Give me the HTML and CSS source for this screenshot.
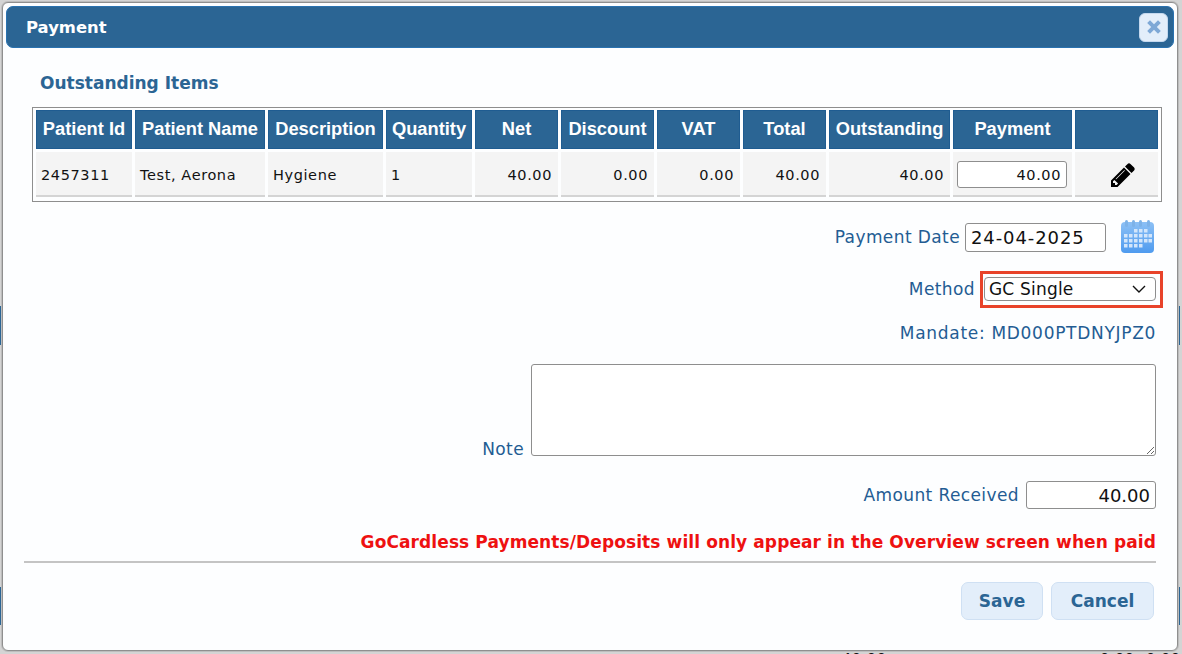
FILE: index.html
```html
<!DOCTYPE html>
<html lang="en">
<head>
    <meta charset="UTF-8">
    <meta name="viewport" content="width=device-width, initial-scale=1.0">
    <title>Payment</title>
    <link rel="stylesheet" href="styles.css">
</head>

<body>
    <!-- page behind the dialog, only slivers of it show -->
    <div class="back-bar back-bar-1"></div>
    <div class="back-bar back-bar-2"></div>
    <span class="back-text back-text-1">40.00</span>
    <span class="back-text back-text-2">0.00</span>
    <span class="back-text back-text-3">0.00</span>

    <div class="dialog">
        <header class="title-bar">
            <span class="title">Payment</span>
            <button class="close" type="button" aria-label="Close">
                <svg width="18" height="18" viewBox="0 0 18 18"><path d="M5 2.2 9 6.2 13 2.2 15.8 5 11.8 9 15.8 13 13 15.8 9 11.8 5 15.8 2.2 13 6.2 9 2.2 5Z"/></svg>
            </button>
        </header>

        <h2 class="section-title">Outstanding Items</h2>

        <div class="table-box">
            <table class="items">
                <colgroup>
                    <col class="c-id"><col class="c-name"><col class="c-desc"><col class="c-qty"><col class="c-net">
                    <col class="c-disc"><col class="c-vat"><col class="c-total"><col class="c-out"><col class="c-pay"><col class="c-edit">
                </colgroup>
                <thead>
                    <tr>
                        <th>Patient Id</th>
                        <th>Patient Name</th>
                        <th>Description</th>
                        <th>Quantity</th>
                        <th>Net</th>
                        <th>Discount</th>
                        <th>VAT</th>
                        <th>Total</th>
                        <th>Outstanding</th>
                        <th>Payment</th>
                        <th></th>
                    </tr>
                </thead>
                <tbody>
                    <tr>
                        <td>2457311</td>
                        <td>Test, Aerona</td>
                        <td>Hygiene</td>
                        <td>1</td>
                        <td class="num">40.00</td>
                        <td class="num">0.00</td>
                        <td class="num">0.00</td>
                        <td class="num">40.00</td>
                        <td class="num">40.00</td>
                        <td class="pay-cell"><input class="field pay-input" type="text" value="40.00"></td>
                        <td class="edit-cell">
                            <svg class="pencil" width="28" height="28" viewBox="0 0 1792 1792"><path d="M491 1536l91-91-235-235-91 91v107h128v128h107zm523-928q0-22-22-22-10 0-17 7l-542 542q-7 7-7 17 0 22 22 22 10 0 17-7l542-542q7-7 7-17zm-54-192l416 416-832 832h-416v-416zm683 96q0 53-37 90l-166 166-416-416 166-165q36-38 90-38 53 0 91 38l235 234q37 39 37 91z"/></svg>
                        </td>
                    </tr>
                </tbody>
            </table>
        </div>

        <form class="pay-form" action="#">
            <div class="row row-date">
                <label>Payment Date</label>
                <input class="field date-input" type="text" value="24-04-2025">
                <svg class="calendar" width="36" height="36" viewBox="0 0 36 36">
                    <defs>
                        <linearGradient id="calBody" x1="0" y1="0" x2="0" y2="1">
                            <stop offset="0" stop-color="#8cc0f5"/>
                            <stop offset="1" stop-color="#4f9bef"/>
                        </linearGradient>
                    </defs>
                    <rect x="1" y="3" width="33" height="31" rx="4" fill="url(#calBody)"/>
                    <g fill="#7db2e8">
                        <rect x="5" y="1" width="3" height="7" rx="1.5"/>
                        <rect x="12" y="1" width="3" height="7" rx="1.5"/>
                        <rect x="19" y="1" width="3" height="7" rx="1.5"/>
                        <rect x="27" y="1" width="3" height="7" rx="1.5"/>
                    </g>
                    <g fill="#d3e6fb">
                        <rect x="14" y="10" width="3.5" height="3.5"/><rect x="19" y="10" width="3.5" height="3.5"/><rect x="24" y="10" width="3.5" height="3.5"/>
                        <rect x="4" y="15" width="3.5" height="3.5"/><rect x="9" y="15" width="3.5" height="3.5"/><rect x="14" y="15" width="3.5" height="3.5"/><rect x="19" y="15" width="3.5" height="3.5"/><rect x="24" y="15" width="3.5" height="3.5"/><rect x="28.5" y="15" width="3.5" height="3.5"/>
                        <rect x="4" y="20" width="3.5" height="3.5"/><rect x="9" y="20" width="3.5" height="3.5"/><rect x="14" y="20" width="3.5" height="3.5"/><rect x="19" y="20" width="3.5" height="3.5"/><rect x="24" y="20" width="3.5" height="3.5"/><rect x="28.5" y="20" width="3.5" height="3.5"/>
                        <rect x="4" y="25" width="3.5" height="3.5"/><rect x="9" y="25" width="3.5" height="3.5"/><rect x="14" y="25" width="3.5" height="3.5"/><rect x="19" y="25" width="3.5" height="3.5"/>
                    </g>
                </svg>
            </div>

            <div class="row row-method">
                <label>Method</label>
                <div class="highlight">
                    <div class="select">
                        <span>GC Single</span>
                        <svg width="14" height="8" viewBox="0 0 14 8"><path d="M1 1 7 7 13 1" fill="none" stroke="#111" stroke-width="1.4"/></svg>
                    </div>
                </div>
            </div>

            <div class="row row-mandate">Mandate: MD000PTDNYJPZ0</div>

            <div class="row row-note">
                <label>Note</label>
                <textarea class="field note-input"></textarea>
            </div>

            <div class="row row-amount">
                <label>Amount Received</label>
                <input class="field amount-input" type="text" value="40.00">
            </div>

            <div class="row row-warning">GoCardless Payments/Deposits will only appear in the Overview screen when paid</div>

            <hr class="divider">

            <div class="row row-buttons">
                <button class="btn btn-save" type="button">Save</button>
                <button class="btn btn-cancel" type="button">Cancel</button>
            </div>
        </form>
    </div>
</body>

</html>
```

FILE: styles.css
```css
* {
    box-sizing: border-box;
}

html, body {
    height: 100%;
}

body {
    position: relative;
    margin: 0;
    padding: 2px 4px 3px 2px;
    background: #d4d4d4;
    font-family: "DejaVu Sans", sans-serif;
    overflow: hidden;
}

.back-bar {
    position: absolute;
    left: 0;
    width: 1180px;
    background: #2b6594;
}

.back-bar-1 {
    top: 306px;
    height: 39px;
}

.back-bar-2 {
    top: 587px;
    height: 38px;
}

.back-text {
    position: absolute;
    top: 650px;
    color: #111;
    font-size: 14.5px;
    letter-spacing: 0.6px;
}

.back-text-1 { left: 842px; }
.back-text-2 { left: 1100px; }
.back-text-3 { left: 1146px; }

.dialog {
    position: relative;
    height: 649px;
    background: #fdfeff;
    border: 1px solid #8f8f8f;
    border-radius: 6px;
    box-shadow: 0 0 0 1px #bdbdbd;
    padding: 3px;
}

.title-bar {
    height: 42px;
    background: #2b6594;
    border: 1px solid #2a72b0;
    border-radius: 7px;
    padding: 0 5px 0 19px;
    display: flex;
    align-items: center;
    justify-content: space-between;
}

.title {
    padding-top: 1px;
    color: #fff;
    font-size: 16.4px;
    font-weight: bold;
}

.close {
    width: 29px;
    height: 29px;
    padding: 0;
    background: #e3eefa;
    border: 1px solid #c4d8ee;
    border-radius: 6px;
    display: flex;
    align-items: center;
    justify-content: center;
}

.close svg {
    fill: #7ea8d6;
}

.section-title {
    margin: 24px 0 13px 34px;
    height: 22px;
    line-height: 22px;
    color: #2b6594;
    font-size: 17px;
    font-weight: bold;
}

.table-box {
    margin: 0 12px 0 26px;
    height: 95px;
    border: 1px solid #8e8e8e;
}

.items {
    width: 100%;
    margin-top: -1px;
    table-layout: fixed;
    border-collapse: separate;
    border-spacing: 3px;
}

.c-id { width: 96px; }
.c-name { width: 130px; }
.c-desc { width: 115px; }
.c-qty { width: 86px; }
.c-net { width: 83px; }
.c-disc { width: 93px; }
.c-vat { width: 83px; }
.c-total { width: 83px; }
.c-out { width: 121px; }
.c-pay { width: 119px; }
.c-edit { width: 83px; }

.items th {
    height: 39px;
    padding: 0 0 2px 0;
    background: #2b6594;
    border: 1px solid #1f5c91;
    color: #fff;
    font-family: "Liberation Sans", Arial, sans-serif;
    font-size: 18.3px;
    font-weight: bold;
    text-align: center;
    white-space: nowrap;
}

.items td {
    height: 45px;
    padding: 2px 5px 0 5px;
    background: #f4f4f4;
    border-bottom: 2px solid #d4d4d4;
    color: #111;
    font-size: 14.5px;
    letter-spacing: 0.6px;
    white-space: nowrap;
}

.items td.num {
    text-align: right;
    padding-right: 6px;
}

.items td.pay-cell {
    padding: 2px 5px 0 4px;
}

.items td.edit-cell {
    padding: 2px 0 0 13px;
}

.pencil {
    display: block;
    margin: 0 auto;
}

.field {
    background: #fff;
    border: 1px solid #8e8e8e;
    border-radius: 3px;
    font-family: "DejaVu Sans", sans-serif;
    color: #111;
    outline: none;
}

.pay-input {
    display: block;
    width: 110px;
    height: 27px;
    padding: 0 5px;
    font-size: 14.5px;
    letter-spacing: 0.6px;
    text-align: right;
}

.pay-form {
    padding: 0 18px;
}

.row {
    display: flex;
    justify-content: flex-end;
    color: #235c93;
    font-size: 17px;
    letter-spacing: 0.4px;
}

.row label {
    margin-right: 5px;
}

.row-date {
    margin-top: 17px;
    height: 36px;
    align-items: center;
}

.date-input {
    width: 141px;
    height: 29px;
    padding: 0 5px;
    font-size: 18px;
    letter-spacing: 0.9px;
}

.calendar {
    margin-left: 14px;
}

.row-method {
    margin-top: 16px;
    align-items: center;
    height: 36px;
}

.highlight {
    border: 3px solid #e8432a;
    padding: 3px 4px 4px 1px;
    margin-right: -7px;
}

.select {
    width: 172px;
    height: 24px;
    background: #fff;
    border: 1px solid #8e8e8e;
    border-radius: 4px;
    padding: 0 9px 0 4px;
    display: flex;
    align-items: center;
    justify-content: space-between;
    color: #111;
    letter-spacing: 0.2px;
}

.row-mandate {
    margin-top: 16px;
    height: 20px;
    align-items: center;
    letter-spacing: 0.7px;
}

.row-note {
    margin-top: 21px;
    align-items: flex-end;
}

.row-note label {
    margin-right: 7px;
    line-height: 14px;
}

.note-input {
    display: block;
    width: 625px;
    height: 92px;
    resize: both;
}

.row-amount {
    margin-top: 25px;
    align-items: center;
}

.row-amount label {
    margin-right: 7px;
}

.amount-input {
    width: 130px;
    height: 28px;
    padding: 0 5px;
    font-size: 18px;
    letter-spacing: 0;
    text-align: right;
}

.row-warning {
    margin-top: 23px;
    height: 20px;
    align-items: center;
    color: #ee1111;
    font-weight: bold;
    letter-spacing: 0.1px;
}

.divider {
    margin: 9px 0 0 0;
    height: 2px;
    border: 0;
    background: #c4c4c4;
}

.row-buttons {
    margin-top: 19px;
    gap: 8px;
    padding-right: 2px;
}

.btn {
    height: 38px;
    background: #e3eefa;
    border: 1px solid #cfe0f3;
    border-radius: 7px;
    color: #2b6594;
    font-family: "DejaVu Sans", sans-serif;
    font-size: 17px;
    font-weight: bold;
}

.btn-save {
    width: 82px;
}

.btn-cancel {
    width: 103px;
}
```
